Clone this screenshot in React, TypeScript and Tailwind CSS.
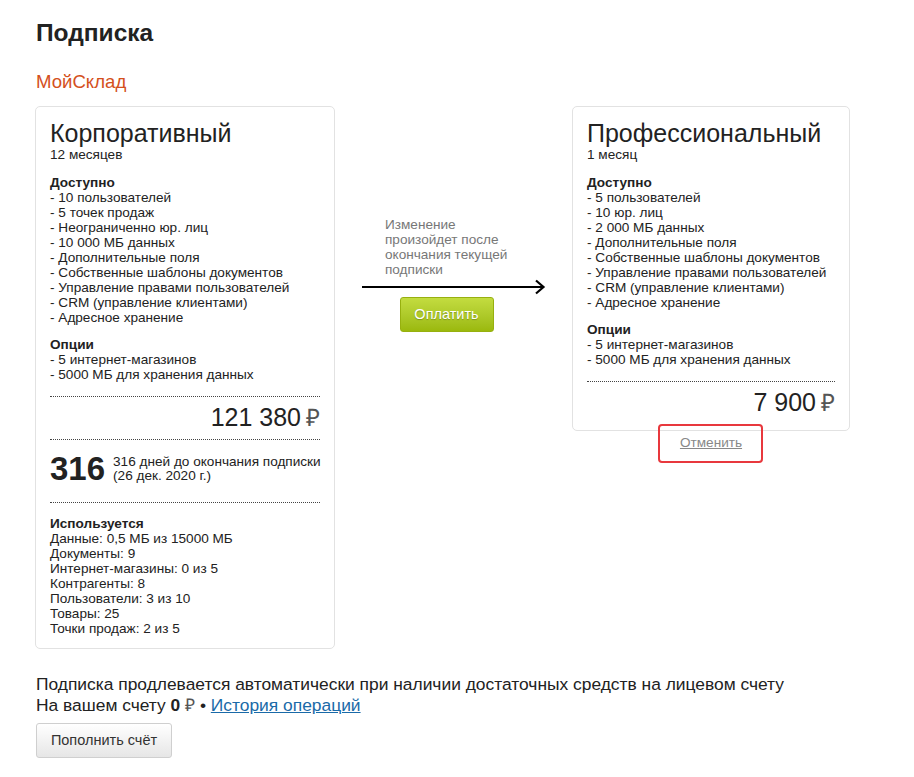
import React from "react";

const Ruble = ({ className = "" }: { className?: string }) => (
  <span className={"text-[#555] " + className}>₽</span>
);

const Dotted = () => <div className="border-t border-dotted border-[#444]" />;

function Item({ children }: { children: React.ReactNode }) {
  return <div>- {children}</div>;
}

export default function App() {
  return (
    <div className="min-h-[777px] bg-white px-[36px] pt-[19px] font-['Liberation_Sans',Arial,sans-serif] text-[#222]">
      <h1 className="text-[24.5px] font-bold leading-[28px]">Подписка</h1>
      <div className="mt-[24px] text-[18.6px] leading-[22px] text-[#d4501c]">МойСклад</div>

      <div className="mt-[13px] -ml-[1px] flex items-start">
        {/* Left card */}
        <div className="w-[300px] rounded-[5px] border border-[#e2e2e2] px-[14px] pt-[12px] pb-[12px] text-[13.6px] leading-[15px]">
          <div className="text-[25px] leading-[28px]">Корпоративный</div>
          <div>12 месяцев</div>

          <div className="mt-[13px] font-bold">Доступно</div>
          <Item>10 пользователей</Item>
          <Item>5 точек продаж</Item>
          <Item>Неограниченно юр. лиц</Item>
          <Item>10 000 МБ данных</Item>
          <Item>Дополнительные поля</Item>
          <Item>Собственные шаблоны документов</Item>
          <Item>Управление правами пользователей</Item>
          <Item>CRM (управление клиентами)</Item>
          <Item>Адресное хранение</Item>

          <div className="mt-[12px] font-bold">Опции</div>
          <Item>5 интернет-магазинов</Item>
          <Item>5000 МБ для хранения данных</Item>

          <div className="mt-[14px]">
            <Dotted />
          </div>
          <div className="mt-[6px] text-right text-[25px] leading-[28px]">
            121 380<Ruble className="ml-[5px] text-[24px]" />
          </div>
          <div className="mt-[7px]">
            <Dotted />
          </div>

          <div className="mt-[11px] flex items-center">
            <div className="shrink-0 text-[33px] font-bold leading-[36px]">316</div>
            <div className="ml-[8px] whitespace-nowrap leading-[14px]">
              <div>316 дней до окончания подписки</div>
              <div>(26 дек. 2020 г.)</div>
            </div>
          </div>

          <div className="mt-[15px]">
            <Dotted />
          </div>

          <div className="mt-[13px] font-bold">Используется</div>
          <div>Данные: 0,5 МБ из 15000 МБ</div>
          <div>Документы: 9</div>
          <div>Интернет-магазины: 0 из 5</div>
          <div>Контрагенты: 8</div>
          <div>Пользователи: 3 из 10</div>
          <div>Товары: 25</div>
          <div>Точки продаж: 2 из 5</div>
        </div>

        {/* Middle */}
        <div className="w-[237px] px-[27px] pt-[111px]">
          <div className="pl-[23px] text-[13.6px] leading-[15px] text-[#777]">
            <div>Изменение</div>
            <div>произойдет после</div>
            <div>окончания текущей</div>
            <div>подписки</div>
          </div>
          <svg width="184" height="16" viewBox="0 0 184 16" className="mt-[2px] block">
            <line x1="0" y1="8" x2="181" y2="8" stroke="#000" strokeWidth="2" />
            <polyline points="174,1.5 181.5,8 174,14.5" fill="none" stroke="#000" strokeWidth="2.2" />
          </svg>
          <div className="mt-[2px] flex justify-center pr-[14px]">
            <button className="h-[35px] w-[94px] rounded-[3px] border border-[#97b00f] bg-gradient-to-b from-[#c3dc3f] to-[#9bb90c] text-[14.5px] text-white [text-shadow:0_1px_1px_rgba(0,0,0,0.25)]">
              Оплатить
            </button>
          </div>
        </div>

        {/* Right card */}
        <div className="flex w-[278px] flex-col items-center">
          <div className="w-full rounded-[5px] border border-[#e2e2e2] px-[14px] pt-[12px] pb-[13px] text-[13.6px] leading-[15px]">
            <div className="text-[25px] leading-[28px]">Профессиональный</div>
            <div>1 месяц</div>

            <div className="mt-[13px] font-bold">Доступно</div>
            <Item>5 пользователей</Item>
            <Item>10 юр. лиц</Item>
            <Item>2 000 МБ данных</Item>
            <Item>Дополнительные поля</Item>
            <Item>Собственные шаблоны документов</Item>
            <Item>Управление правами пользователей</Item>
            <Item>CRM (управление клиентами)</Item>
            <Item>Адресное хранение</Item>

            <div className="mt-[12px] font-bold">Опции</div>
            <Item>5 интернет-магазинов</Item>
            <Item>5000 МБ для хранения данных</Item>

            <div className="mt-[14px]">
              <Dotted />
            </div>
            <div className="mt-[6px] text-right text-[25px] leading-[28px]">
              7 900<Ruble className="ml-[5px] text-[24px]" />
            </div>
          </div>
          <div className="relative mt-[4px] text-[13.6px] leading-[15px]">
            <a className="text-[#888] underline">Отменить</a>
            <div className="pointer-events-none absolute -left-[22px] -right-[21px] -top-[11px] -bottom-[13px] rounded-[4px] border-2 border-[#e8383d]" />
          </div>
        </div>
      </div>

      <div className="mt-[25px] text-[17.4px] leading-[21px]">
        <div>Подписка продлевается автоматически при наличии достаточных средств на лицевом счету</div>
        <div>
          На вашем счету <b>0</b> <Ruble /> •{" "}
          <a className="text-[#1a6aa8] underline">История операций</a>
        </div>
      </div>
      <button className="mt-[7px] h-[35px] w-[136px] rounded-[3px] border border-[#cfcfcf] bg-gradient-to-b from-white to-[#e6e6e6] text-[14.5px] text-[#333]">
        Пополнить счёт
      </button>
    </div>
  );
}
